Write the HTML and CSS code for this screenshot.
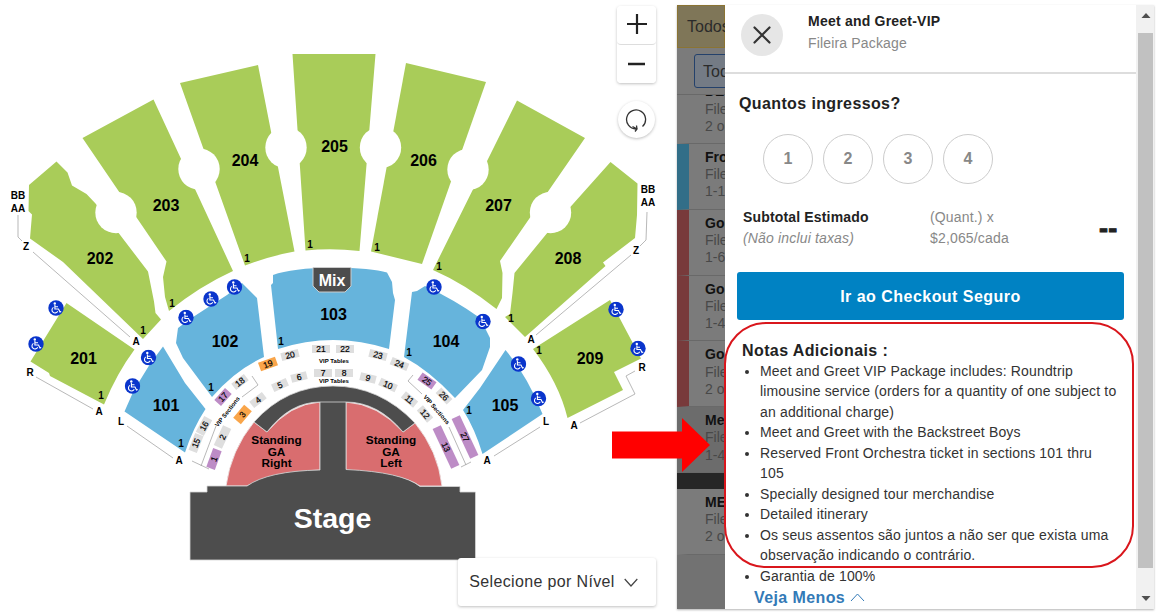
FILE: index.html
```html
<!DOCTYPE html>
<html lang="pt-BR">
<head>
    <meta charset="UTF-8">
    <meta name="viewport" content="width=device-width, initial-scale=1.0">
    <title>Meet and Greet-VIP</title>
    <link rel="stylesheet" href="styles.css">
</head>
<body>
    <main class="map">
        <svg class="seats" width="677" height="615" viewBox="0 0 677 615">
            <defs>
                <symbol id="access" viewBox="0 0 16 16">
                    <circle cx="8" cy="8" r="7.7" fill="#0a35cc"/>
                    <circle cx="6.8" cy="3.5" r="1.2" fill="#fff"/>
                    <path d="M6.9 5v4h3.6l1.5 3 1.2-.5M7 6.8h3M5.4 7.4a3 3 0 1 0 4.3 3.8" fill="none" stroke="#fff" stroke-width="1.1"/>
                </symbol>
            </defs>

            <!-- 200 level -->
            <g class="green">
                <path d="M66.5 303L134.5 349.5Q117 373 104 404.5L50 376L49 373L30.5 361.5Z"/>
                <path d="M56.5 161.5L29 185L28.5 211L32 214.5L30 238.5L63 262L143 339L161 319.5L155.5 313L154 301.5L148 271.5L119 233.5L95.5 203.5L86.5 194L72 185.5L67.5 172.5Z"/>
                <path d="M153.5 99.5L82.5 138L166.5 261.5L163 277L165 297L169 311Q200 286 233 271Z"/>
                <path d="M180 83L258 65L294.5 251.5Q270 256 245 265.5Z"/>
                <path d="M292.5 54H375.5L359.5 251Q332 248 305.5 250.5Z"/>
                <path d="M406 63L486 82L422 264L371 251.5Z"/>
                <path d="M517 100.5L585 138L500 261L502.5 273L502 298L496.5 309Q465 284 433 270Z"/>
                <path d="M610.5 162L637.5 183.5L637 215L635 238L603 262.5L605.5 266L525 337L505 317L510 314L512.5 293L514.5 273L548 232Z"/>
                <path d="M610 300L641 358.5L614 372L623 390L567.5 418Q559 383 533 349Z"/>
            </g>
            <g fill="#fff">
                <circle cx="116" cy="212.5" r="20.7"/>
                <circle cx="199" cy="169" r="20.7"/>
                <circle cx="286" cy="147.5" r="20.7"/>
                <circle cx="380.5" cy="147.5" r="20.7"/>
                <circle cx="468" cy="169.5" r="20.7"/>
                <circle cx="550.5" cy="212.5" r="20.7"/>
            </g>

            <!-- 100 level -->
            <g class="blue">
                <path d="M163 346.5L185 383L205.5 409Q193 428 185 452.5L124.5 411.5L134 390L150 364Z"/>
                <path d="M178 328L190 319L227 295L242 283L257 298L264 357Q235 370 212 397L183 358L176 343Z"/>
                <path d="M273 275Q292 268 333 267.5Q372 268 387 272.5L392 282L393 293L395 300L389 349Q333 331 278 349L271 285L273 283Z"/>
                <path d="M412 292L417 291L425 286Q455 300 480 318L490 338L490 347L482 370L455 398Q430 371 404 357Z"/>
                <path d="M505.5 350Q528 377 542.5 414L482.5 454Q475 429 463 410L480 388Z"/>
            </g>
            <path d="M313 267.5H351V286L345 292H319L313 286Z" fill="#4d4d4d" stroke="#ccc"/>

            <!-- stage and pit -->
            <path d="M226 486Q231 450 254 422L267 432Q290 404 320 402V470Q270 472 247 486Z" class="red"/>
            <path d="M442 486Q438 451 415 423L403 432Q378 404 346 402V470Q402 473 420 486Z" class="red"/>
            <path d="M254 422Q286 386 333 386Q380 386 415 423L403 432Q378 402 346 402V469.5Q402 472 420 486.5H460V492H475.5V560H190V492H207V486H247Q268 471 320 470V402Q290 402 267 432Z" fill="#4d4d4d" stroke="#d6d6d6" stroke-width=".8"/>
            <path d="M320 402H346" stroke="#d6d6d6" stroke-width=".8"/>

            <!-- VIP tables -->
            <g class="table">
                <g transform="translate(321 349)"><rect x="-9" y="-4" width="18" height="8"/><text y="3">21</text></g>
                <g transform="translate(345 349)"><rect x="-9" y="-4" width="18" height="8"/><text y="3">22</text></g>
                <g transform="translate(290 355) rotate(-14)"><rect x="-9" y="-4" width="18" height="8"/><text y="3">20</text></g>
                <g transform="translate(268 364) rotate(-20)" class="orange"><rect x="-9" y="-4.5" width="18" height="9"/><text y="3">19</text></g>
                <g transform="translate(240 382) rotate(-38)"><rect x="-8" y="-4" width="16" height="8"/><text y="3">18</text></g>
                <g transform="translate(223 397) rotate(-48)" class="purple"><rect x="-8" y="-4.5" width="16" height="9"/><text y="3">17</text></g>
                <g transform="translate(204 426) rotate(-62)"><rect x="-9" y="-4.5" width="18" height="9"/><text y="3">16</text></g>
                <g transform="translate(196 443) rotate(-68)"><rect x="-9" y="-4.5" width="18" height="9"/><text y="3">15</text></g>
                <g transform="translate(323 373)"><rect x="-9" y="-4" width="18" height="8"/><text y="3">7</text></g>
                <g transform="translate(344 373)"><rect x="-9" y="-4" width="18" height="8"/><text y="3">8</text></g>
                <g transform="translate(299 377) rotate(-14)"><rect x="-8" y="-4" width="16" height="8"/><text y="3">6</text></g>
                <g transform="translate(280 385) rotate(-24)"><rect x="-8" y="-4" width="16" height="8"/><text y="3">5</text></g>
                <g transform="translate(258 400) rotate(-38)"><rect x="-8" y="-4" width="16" height="8"/><text y="3">4</text></g>
                <g transform="translate(242.5 414.5) rotate(-50)" class="orange"><rect x="-8.5" y="-5" width="17" height="10"/><text y="3">3</text></g>
                <g transform="translate(222.5 437) rotate(-65)"><rect x="-11" y="-4.5" width="22" height="9"/><text y="3">2</text></g>
                <g transform="translate(214 459) rotate(-70)" class="purple"><rect x="-10" y="-4.5" width="20" height="9"/><text y="3">1</text></g>
                <g transform="translate(378 355) rotate(14)"><rect x="-9" y="-4" width="18" height="8"/><text y="3">23</text></g>
                <g transform="translate(399.5 364) rotate(22)"><rect x="-9" y="-4" width="18" height="8"/><text y="3">24</text></g>
                <g transform="translate(427 381) rotate(35)" class="purple"><rect x="-8.5" y="-4.5" width="17" height="9"/><text y="3">25</text></g>
                <g transform="translate(444 396) rotate(46)"><rect x="-8" y="-4" width="16" height="8"/><text y="3">26</text></g>
                <g transform="translate(465 437) rotate(65)" class="purple"><rect x="-22" y="-4.5" width="44" height="9"/><text y="3">27</text></g>
                <g transform="translate(368 378) rotate(14)"><rect x="-8" y="-4" width="16" height="8"/><text y="3">9</text></g>
                <g transform="translate(388 385) rotate(24)"><rect x="-9" y="-4" width="18" height="8"/><text y="3">10</text></g>
                <g transform="translate(409.5 399.5) rotate(40)"><rect x="-8" y="-4" width="16" height="8"/><text y="3">11</text></g>
                <g transform="translate(425 414) rotate(50)"><rect x="-8" y="-4" width="16" height="8"/><text y="3">12</text></g>
                <g transform="translate(446 447) rotate(65)" class="purple"><rect x="-22" y="-4.5" width="44" height="9"/><text y="3">13</text></g>
            </g>
            <g class="tiny">
                <text x="334" y="362.500">VIP Tables</text>
                <text x="334" y="383">VIP Tables</text>
                <text transform="translate(229 413) rotate(-52)">VIP Sections</text>
                <text transform="translate(435 411) rotate(49)">VIP Sections</text>
            </g>

            <!-- row guides -->
            <g class="guide">
                <path d="M18 215V237L22 241M33 252L130 337M36 377L93 409M127 426L173 458"/>
                <path d="M647 212L646 240L640 246M631 255L536 335M635 371L626 376L635 394L580 423M540 427L494 456"/>
                <path d="M192 461L209 469M201 466L216 426M242 397L258 385L252 376M413 375L408 381L422 394M449 427L466 465M461 467L471 462"/>
            </g>

            <g class="section">
                <text x="83.500" y="364">201</text>
                <text x="100" y="264">202</text>
                <text x="166" y="211">203</text>
                <text x="245" y="166">204</text>
                <text x="334.500" y="152">205</text>
                <text x="423.500" y="166">206</text>
                <text x="498.500" y="211">207</text>
                <text x="568" y="264">208</text>
                <text x="590" y="364">209</text>
                <text x="166" y="411">101</text>
                <text x="225" y="347">102</text>
                <text x="333.500" y="320">103</text>
                <text x="446" y="347">104</text>
                <text x="505" y="411">105</text>
                <text x="332" y="286" class="white">Mix</text>
            </g>
            <text x="332.500" y="528" class="stage">Stage</text>
            <g class="pit">
                <text x="276.500" y="444">Standing</text>
                <text x="276.500" y="455.500">GA</text>
                <text x="276.500" y="467">Right</text>
                <text x="391" y="444">Standing</text>
                <text x="391" y="455.500">GA</text>
                <text x="391" y="467">Left</text>
            </g>
            <g class="row">
                <text x="18" y="199">BB</text>
                <text x="18" y="212">AA</text>
                <text x="26" y="250">Z</text>
                <text x="136" y="345">A</text>
                <text x="30" y="376">R</text>
                <text x="99" y="415">A</text>
                <text x="121" y="425">L</text>
                <text x="179" y="464">A</text>
                <text x="648" y="193">BB</text>
                <text x="648" y="206">AA</text>
                <text x="636" y="254">Z</text>
                <text x="531" y="343">A</text>
                <text x="642" y="371">R</text>
                <text x="574" y="429">A</text>
                <text x="546" y="425">L</text>
                <text x="487" y="464">A</text>
                <text x="143" y="334">1</text>
                <text x="172" y="307">1</text>
                <text x="247" y="262">1</text>
                <text x="310" y="248">1</text>
                <text x="377" y="251">1</text>
                <text x="439" y="270">1</text>
                <text x="511" y="322">1</text>
                <text x="539" y="354">1</text>
                <text x="101" y="399">1</text>
                <text x="181" y="447">1</text>
                <text x="211" y="391">1</text>
                <text x="281" y="345">1</text>
                <text x="409" y="356">1</text>
                <text x="469" y="414">1</text>
            </g>
            <g>
                <use href="#access" x="48" y="300" width="16" height="16"/>
                <use href="#access" x="28" y="336" width="16" height="16"/>
                <use href="#access" x="140.5" y="349.5" width="16" height="16"/>
                <use href="#access" x="124.5" y="378" width="16" height="16"/>
                <use href="#access" x="178" y="309.5" width="16" height="16"/>
                <use href="#access" x="203" y="291" width="16" height="16"/>
                <use href="#access" x="226.5" y="279" width="16" height="16"/>
                <use href="#access" x="426" y="279" width="16" height="16"/>
                <use href="#access" x="475" y="313.5" width="16" height="16"/>
                <use href="#access" x="510.5" y="356" width="16" height="16"/>
                <use href="#access" x="530.5" y="390.5" width="16" height="16"/>
                <use href="#access" x="608" y="301.5" width="16" height="16"/>
                <use href="#access" x="630" y="340.5" width="16" height="16"/>
            </g>
        </svg>

        <div class="controls">
            <div class="zoom">
                <button><svg width="22" height="22"><path d="M1 10H21M11 0V20" stroke="#222" stroke-width="2.2"/></svg></button>
                <button><svg width="22" height="22"><path d="M2 11H19" stroke="#222" stroke-width="2.5"/></svg></button>
            </div>
            <button class="reset">
                <svg width="24" height="24" fill="none" stroke="#333" stroke-width="1.3"><path d="M17.5 18.500A9.500 9.500 0 1 0 11 21M7.500 18.500L12 21L10 23.500M12 21L11.500 17.500"/></svg>
            </button>
        </div>
        <button class="level">Selecione por Nível
            <svg width="14" height="9"><path d="M.7 1L7 8L13.3 1" fill="none" stroke="#444" stroke-width="1.2"/></svg>
        </button>
    </main>

    <aside class="panel">
        <div class="list">
            <div class="all">Todos</div>
            <div class="filter"><span>Todos</span></div>
            <div class="tickets">
                <div class="ticket first"><b>DE</b><span>Fileira</span><span>2 ou</span></div>
                <div class="ticket front"><b>Front</b><span>Fileira</span><span>1-10</span></div>
                <div class="ticket gold"><b>Gold</b><span>Fileira</span><span>1-6</span></div>
                <div class="ticket gold"><b>Gold</b><span>Fileira</span><span>1-4</span></div>
                <div class="ticket gold"><b>Gold</b><span>Fileira</span><span>2 ou</span></div>
                <div class="ticket active"><b>Meet</b><span>Fileira</span><span>1-4</span></div>
                <div class="bar"></div>
                <div class="ticket"><b>MEET</b><span>Fileira</span><span>2 ou</span></div>
            </div>
        </div>

        <section class="drawer">
            <header>
                <button class="close"><svg width="18" height="18"><path d="M1.500 1.500L16.500 16.500M16.500 1.500L1.500 16.500" stroke="#333" stroke-width="2.200" stroke-linecap="round"/></svg></button>
                <div class="title">
                    <h1>Meet and Greet-VIP</h1>
                    <p>Fileira Package</p>
                </div>
            </header>
            <h2>Quantos ingressos?</h2>
            <div class="quantity">
                <button>1</button>
                <button>2</button>
                <button>3</button>
                <button>4</button>
            </div>
            <div class="subtotal">
                <div class="label"><b>Subtotal Estimado</b><i>(Não inclui taxas)</i></div>
                <div class="price">(Quant.) x<br>$2,065/cada</div>
                <div class="total">--</div>
            </div>
            <button class="checkout">Ir ao Checkout Seguro</button>
            <h3>Notas Adicionais :</h3>
            <ul>
                <li>Meet and Greet VIP Package includes: Roundtrip<br>limousine service (orders for a quantity of one subject to<br>an additional charge)</li>
                <li>Meet and Greet with the Backstreet Boys</li>
                <li>Reserved Front Orchestra ticket in sections 101 thru<br>105</li>
                <li>Specially designed tour merchandise</li>
                <li>Detailed itinerary</li>
                <li>Os seus assentos são juntos a não ser que exista uma<br>observação indicando o contrário.</li>
                <li>Garantia de 100%</li>
            </ul>
            <div class="less">Veja Menos <svg width="15" height="9"><path d="M1 8L7.5 1L14 8" fill="none" stroke="#337ab7"/></svg></div>
        </section>

        <div class="scrollbar">
            <svg width="18" height="28"><path d="M5.5 13L10 8L14.5 13Z" fill="#505050"/></svg>
            <div class="thumb"></div>
            <svg width="18" height="41"><path d="M5.5 28L10 33L14.5 28Z" fill="#505050"/></svg>
        </div>
    </aside>

    <!-- callouts -->
    <svg class="arrow" width="98" height="54"><path d="M0 13.5H70V0L98 27L70 54V40.5H0Z" fill="#f00"/></svg>
    <div class="highlight"></div>
</body>
</html>
```
FILE: styles.css
```css
* {
    margin: 0;
    padding: 0;
    box-sizing: border-box;
}

body {
    display: flex;
    width: 1160px;
    height: 615px;
    overflow: hidden;
    position: relative;
    background: #fff;
    color: #222;
    font-family: "Liberation Sans", Arial, sans-serif;
    font-size: 14px;
}

button {
    border: none;
    background: #fff;
    font-family: inherit;
    display: flex;
    align-items: center;
    justify-content: center;
}

svg {
    display: block;
}

/* seat map */
.map {
    width: 677px;
    flex: none;
    position: relative;
}

.green {
    fill: #a9cc59;
}

.blue {
    fill: #66b4dc;
}

.red {
    fill: #d96d6f;
    stroke: #eee;
    stroke-width: 0.8px;
}

.seats text {
    font-weight: bold;
    text-anchor: middle;
    fill: #000;
}

.section {
    font-size: 16px;
}

.seats .white {
    fill: #fff;
}

.seats .stage {
    font-size: 28.5px;
    fill: #fff;
}

.pit {
    font-size: 11.8px;
}

.row {
    font-size: 10px;
}

.table {
    font-size: 8.5px;
    fill: #dedede;
}

.seats .table text {
    font-weight: normal;
    stroke: #000;
    stroke-width: 0.2px;
}

.orange {
    fill: #f9a54a;
}

.purple {
    fill: #bd8cc6;
}

.tiny {
    font-size: 6px;
}

.guide {
    fill: none;
    stroke: #999;
    stroke-width: 0.7px;
}

.controls {
    position: absolute;
    top: 6px;
    left: 617px;
    width: 39px;
}

.zoom {
    border-radius: 4px;
    box-shadow: 0 1px 3px rgba(0, 0, 0, 0.25);
}

.zoom button {
    width: 39px;
    height: 38px;
    border-radius: 4px;
}

.zoom button:first-child {
    height: 39px;
    border-bottom: 1px solid #ddd;
}

.reset {
    width: 37px;
    height: 37px;
    margin: 18px 1px 0;
    border-radius: 50%;
    box-shadow: 0 1px 3px rgba(0, 0, 0, 0.25);
}

.level {
    position: absolute;
    left: 458px;
    top: 558px;
    width: 198px;
    height: 48px;
    padding-right: 7px;
    gap: 9px;
    border-radius: 3px;
    box-shadow: 0 1px 3px rgba(0, 0, 0, 0.25);
    color: #333;
    font-size: 16px;
    letter-spacing: 0.36px;
}

/* ticket list, dimmed behind the drawer */
.panel {
    display: flex;
    height: 604px;
    margin-top: 5px;
    box-shadow: 0 1px 2px rgba(0, 0, 0, 0.3);
}

.list {
    width: 48px;
    overflow: hidden;
    background: #727272;
    white-space: nowrap;
}

.all {
    height: 43px;
    padding-left: 9px;
    border: 1px solid #8b7433;
    background: #7f7658;
    color: #2b2b2b;
    font-size: 16px;
    line-height: 42px;
}

.filter {
    height: 47px;
    padding: 6px 0 0 17px;
    background: #7b7b7b;
    border-bottom: 1px solid #696969;
}

.filter span {
    display: block;
    width: 60px;
    height: 34px;
    padding-left: 8px;
    border: 1px solid #24416b;
    border-radius: 3px;
    background: #747b85;
    color: #2b2b2b;
    font-size: 16px;
    line-height: 33px;
}

.ticket {
    display: flex;
    flex-direction: column;
    height: 65.8px;
    padding: 5px 0 0 16px;
    border-left: 12px solid #7b7b7b;
    border-bottom: 1px solid #696969;
    background: #7b7b7b;
    color: #484848;
    line-height: 17.2px;
}

.ticket b {
    color: #111;
}

.first {
    height: 49px;
    padding-top: 0;
    justify-content: flex-end;
    padding-bottom: 8px;
    overflow: hidden;
}

.front {
    border-left-color: #326e88;
}

.gold {
    border-left-color: #783a3b;
}

.active {
    background: #6c6c6c;
    border-left-color: #6c6c6c;
}

.bar {
    height: 16px;
    background: #262626;
}

/* drawer */
.drawer {
    width: 411px;
    background: #fff;
    overflow: hidden;
    letter-spacing: 0.16px;
}

.drawer header {
    display: flex;
    height: 69px;
    padding: 9px 0 0 16px;
    border-bottom: 2px solid #ddd;
}

.close {
    width: 42px;
    height: 42px;
    border-radius: 50%;
    background: #e6e6e6;
}

.title {
    margin-left: 25px;
}

h1 {
    font-size: 14px;
    line-height: 14px;
    margin-bottom: 7px;
    letter-spacing: 0.22px;
}

.title p {
    color: #888;
    line-height: 17px;
}

h2 {
    margin: 20px 0 0 14px;
    font-size: 16px;
    line-height: 20px;
    letter-spacing: 0.38px;
}

.quantity {
    display: flex;
    gap: 10px;
    margin: 20px 0 0 38px;
}

.quantity button {
    width: 50px;
    height: 50px;
    border: 1px solid #ccc;
    border-radius: 50%;
    color: #888;
    font-size: 16px;
    font-weight: bold;
}

.subtotal {
    display: flex;
    margin: 23px 0 0 18px;
    height: 42px;
    line-height: 21px;
    color: #888;
}

.label {
    width: 187px;
}

.label b, .label i {
    display: block;
}

.label b {
    color: #222;
}

.price {
    width: 169px;
}

.total {
    color: #222;
    font-size: 27px;
    font-weight: bold;
    line-height: 44px;
    -webkit-text-stroke: 0.9px #222;
}

.checkout {
    width: 387px;
    height: 48px;
    margin: 23px 0 0 12px;
    border-radius: 3px;
    background: #0082c3;
    color: #fff;
    font-size: 16px;
    font-weight: bold;
    letter-spacing: 0.47px;
    padding-top: 2px;
}

h3 {
    margin: 21px 0 0 17px;
    font-size: 16px;
    line-height: 20px;
    letter-spacing: 0.4px;
}

ul {
    padding-left: 35px;
    line-height: 20.46px;
    white-space: nowrap;
    color: #333;
}

.less {
    display: flex;
    align-items: center;
    gap: 5px;
    padding: 1px 0 0 29px;
    color: #337ab7;
    font-size: 16px;
    font-weight: bold;
    line-height: 22px;
    letter-spacing: 0.4px;
}

.scrollbar {
    display: flex;
    flex-direction: column;
    width: 18px;
    background: #f1f1f1;
}

.thumb {
    flex: 1;
    margin: 0 1px 0 2px;
    background: #c1c1c1;
}

/* callouts */
.arrow {
    position: absolute;
    left: 612px;
    top: 418px;
}

.highlight {
    position: absolute;
    left: 724px;
    top: 322px;
    width: 410px;
    height: 246px;
    border: 2px solid #d9161c;
    border-radius: 42px;
}
```
